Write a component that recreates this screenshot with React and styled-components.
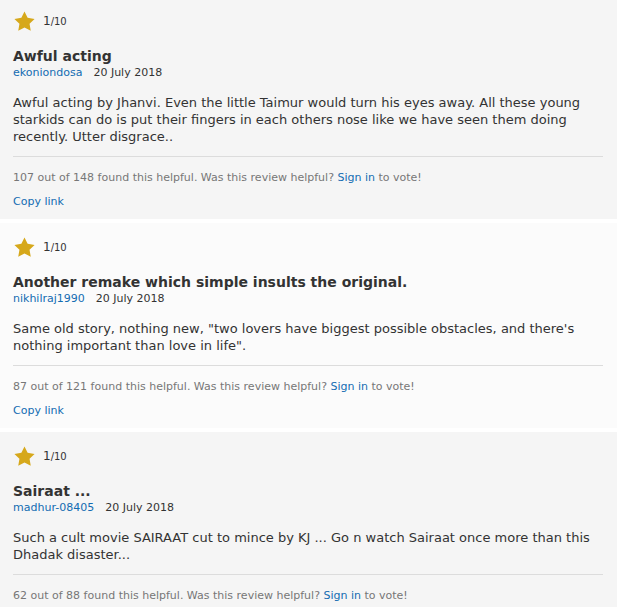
import React from 'react';
import styled, {createGlobalStyle} from 'styled-components';

const GlobalStyle = createGlobalStyle`
    body {
        margin: 0;
        background: #fff;
        font-family: "DejaVu Sans", Verdana, sans-serif;
        color: #333;
        overflow: hidden;
    }
`;

const List = styled.div`
    width: 617px;
    margin-top: -3px;
`;

const Card = styled.div`
    background: ${p => (p.light ? '#fbfbfb' : '#f5f5f5')};
    padding: 14px 14px 10px 13px;
    margin-bottom: 4px;
`;

const Rating = styled.div`
    display: flex;
    align-items: center;
    height: 20px;
    padding-left: 1px;
`;

const RatingValue = styled.span`
    margin-left: 8px;
    font-size: 12px;
    color: #333;
`;

const RatingMax = styled.span`
    font-size: 10px;
`;

const Title = styled.div`
    margin-top: 15px;
    font-size: 14px;
    font-weight: bold;
    line-height: 21px;
    color: #333;
`;

const Meta = styled.div`
    font-size: 11px;
    line-height: 12px;
    color: #333;
`;

const Link = styled.a`
    color: #136cb2;
    text-decoration: none;
    cursor: pointer;
`;

const Date = styled.span`
    margin-left: 11px;
`;

const Body = styled.div`
    margin-top: 15px;
    font-size: 13px;
    line-height: 17px;
    color: #333;
`;

const Divider = styled.hr`
    margin: 11px 0 0;
    border: 0;
    border-top: 1px solid #dcdcdc;
`;

const Helpful = styled.div`
    margin-top: 14px;
    font-size: 11px;
    line-height: 14px;
    color: #777;
`;

const CopyLink = styled.div`
    margin-top: 10px;
    font-size: 11px;
    line-height: 14px;
`;

const Star = () => (
    <svg width="21" height="20" viewBox="0 0 24 23">
        <path d="M12 0.6l3.6 7.3 8 1.2-5.8 5.6 1.4 8-7.2-3.8-7.2 3.8 1.4-8L0.4 9.1l8-1.2z" fill="#d6a81b" />
    </svg>
);

const reviews = [
    {
        title: 'Awful acting',
        author: 'ekoniondosa',
        date: '20 July 2018',
        lines: [
            'Awful acting by Jhanvi. Even the little Taimur would turn his eyes away. All these young',
            'starkids can do is put their fingers in each others nose like we have seen them doing',
            'recently. Utter disgrace..',
        ],
        helpful: '107 out of 148',
    },
    {
        title: 'Another remake which simple insults the original.',
        author: 'nikhilraj1990',
        date: '20 July 2018',
        lines: [
            'Same old story, nothing new, "two lovers have biggest possible obstacles, and there\'s',
            'nothing important than love in life".',
        ],
        helpful: '87 out of 121',
        light: true,
    },
    {
        title: 'Sairaat ...',
        author: 'madhur-08405',
        date: '20 July 2018',
        lines: [
            'Such a cult movie SAIRAAT cut to mince by KJ ... Go n watch Sairaat once more than this',
            'Dhadak disaster...',
        ],
        helpful: '62 out of 88',
    },
];

const Review = ({review}) => (
    <Card light={review.light}>
        <Rating>
            <Star />
            <RatingValue>1<RatingMax>/10</RatingMax></RatingValue>
        </Rating>
        <Title>{review.title}</Title>
        <Meta>
            <Link>{review.author}</Link>
            <Date>{review.date}</Date>
        </Meta>
        <Body>
            {review.lines.map((line, i) => (
                <React.Fragment key={i}>
                    {line}
                    {i < review.lines.length - 1 && <br />}
                </React.Fragment>
            ))}
        </Body>
        <Divider />
        <Helpful>
            {review.helpful} found this helpful. Was this review helpful? <Link>Sign in</Link> to vote!
        </Helpful>
        <CopyLink><Link>Copy link</Link></CopyLink>
    </Card>
);

export default function App() {
    return (
        <>
            <GlobalStyle />
            <List>
                {reviews.map((r, i) => <Review key={i} review={r} />)}
            </List>
        </>
    );
}
